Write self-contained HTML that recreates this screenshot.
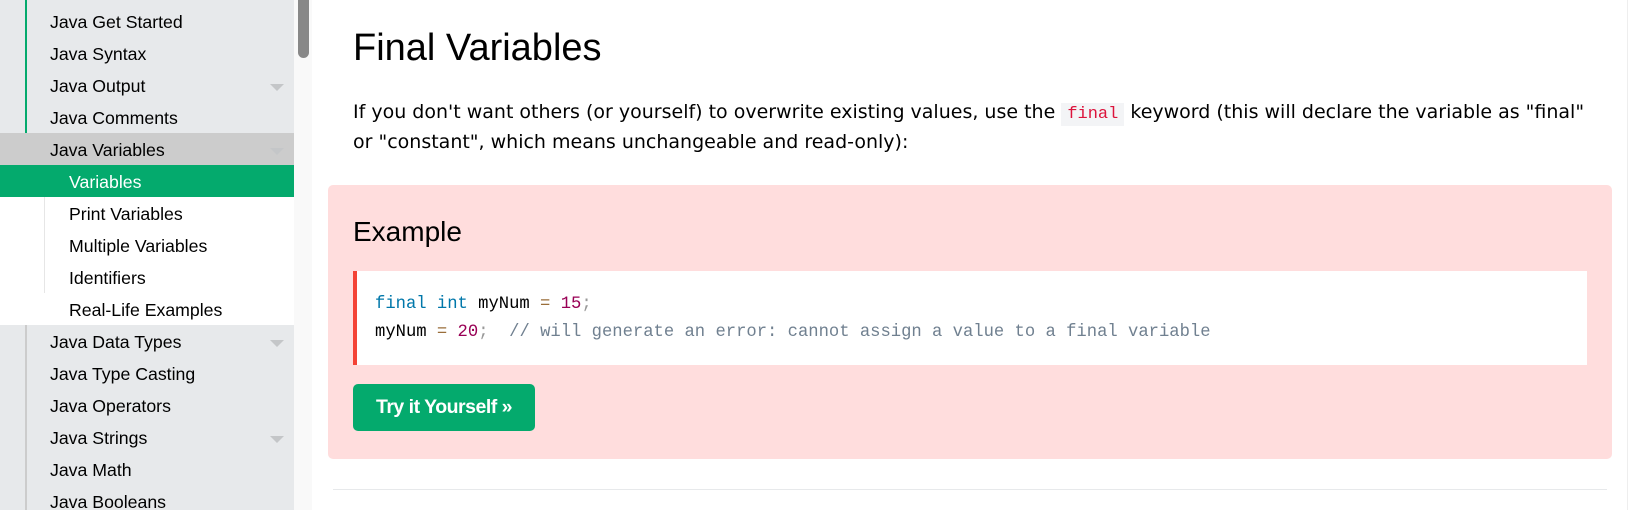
<!DOCTYPE html>
<html><head><meta charset="utf-8"><style>
*{margin:0;padding:0;box-sizing:border-box}
body{width:1638px;height:510px;overflow:hidden;background:#fff;position:relative;font-family:"DejaVu Sans",Verdana,sans-serif}
#side{position:absolute;left:0;top:0;width:294px;height:510px;background:#e7e9eb;font-family:"Liberation Sans",sans-serif;font-size:17.7px;color:#000}
.it{position:absolute;left:0;width:294px;height:32px;line-height:34px;padding-left:50px}
.sub{padding-left:69px;background:#fff}
.act{background:#04aa6d;color:#fff}
.cur{background:#cccccc}
.arr{position:absolute;right:10px;top:15px;width:0;height:0;border-left:7px solid transparent;border-right:7px solid transparent;border-top:7px solid #c4c6c8}
#track{position:absolute;left:294px;top:0;width:18px;height:510px;background:#f9f9f9}
#thumb{position:absolute;left:298px;top:0;width:11px;height:58px;background:#888;border-radius:0 0 6px 6px}
.p{position:absolute;left:353px;font-size:19px;color:#000;white-space:nowrap}
code.k{font-family:"Liberation Mono",monospace;color:#dc143c;background:#f3f4f6;padding:2px 6px;font-size:17px}
</style></head><body>
<div id="side">
<div style="position:absolute;left:25px;top:0;width:2px;height:133px;background:#04aa6d"></div>
<div class="it" style="top:5px">Java Get Started</div>
<div class="it" style="top:37px">Java Syntax</div>
<div class="it" style="top:69px">Java Output<span class="arr"></span></div>
<div class="it" style="top:101px">Java Comments</div>
<div class="it cur" style="top:133px">Java Variables<span class="arr"></span></div>
<div class="it sub act" style="top:165px">Variables</div>
<div class="it sub" style="top:197px">Print Variables</div>
<div class="it sub" style="top:229px">Multiple Variables</div>
<div class="it sub" style="top:261px">Identifiers</div>
<div class="it sub" style="top:293px">Real-Life Examples</div>
<div style="position:absolute;left:44px;top:197px;width:1px;height:96px;background:#e6e6e6"></div>
<div class="it" style="top:325px">Java Data Types<span class="arr"></span></div>
<div class="it" style="top:357px">Java Type Casting</div>
<div class="it" style="top:389px">Java Operators</div>
<div class="it" style="top:421px">Java Strings<span class="arr"></span></div>
<div class="it" style="top:453px">Java Math</div>
<div class="it" style="top:485px">Java Booleans</div>
<div style="position:absolute;left:25px;top:325px;width:2px;height:185px;background:#ccc"></div>
</div>
<div id="track"></div><div id="thumb"></div>
<div style="position:absolute;left:353px;top:27px;font-family:'Liberation Sans',sans-serif;font-size:38px;color:#000">Final Variables</div>
<div class="p" style="top:101px">If you don't want others (or yourself) to overwrite existing values, use the <code class="k">final</code> keyword (this will declare the variable as "final"</div>
<div class="p" style="top:131px">or "constant", which means unchangeable and read-only):</div>
<div style="position:absolute;left:328px;top:185px;width:1284px;height:274px;background:#ffdddd;border-radius:5px">
<div style="position:absolute;left:25px;top:31px;font-family:'Liberation Sans',sans-serif;font-size:28px">Example</div>
<div style="position:absolute;left:25px;top:86px;width:1234px;height:94px;background:#fff;border-left:4px solid #f44336;font-family:'Liberation Mono',monospace;font-size:17.2px;line-height:28px;padding:20px 0 0 18px;white-space:pre"><span style="color:#0077aa">final int</span> myNum <span style="color:#9a6e3a">=</span> <span style="color:#990055">15</span><span style="color:#999">;</span>
myNum <span style="color:#9a6e3a">=</span> <span style="color:#990055">20</span><span style="color:#999">;</span>  <span style="color:#708090">// will generate an error: cannot assign a value to a final variable</span></div>
<div style="position:absolute;left:25px;top:199px;width:182px;height:47px;background:#04aa6d;border-radius:5px;color:#fff;font-family:'Liberation Sans',sans-serif;font-weight:bold;font-size:19.5px;line-height:47px;text-align:center;letter-spacing:-0.5px">Try it Yourself »</div>
</div>
<div style="position:absolute;left:333px;top:489px;width:1274px;height:1px;background:#e7e9eb"></div>
<div style="position:absolute;left:1627px;top:0;width:1px;height:510px;background:#eee"></div>
</body></html>
